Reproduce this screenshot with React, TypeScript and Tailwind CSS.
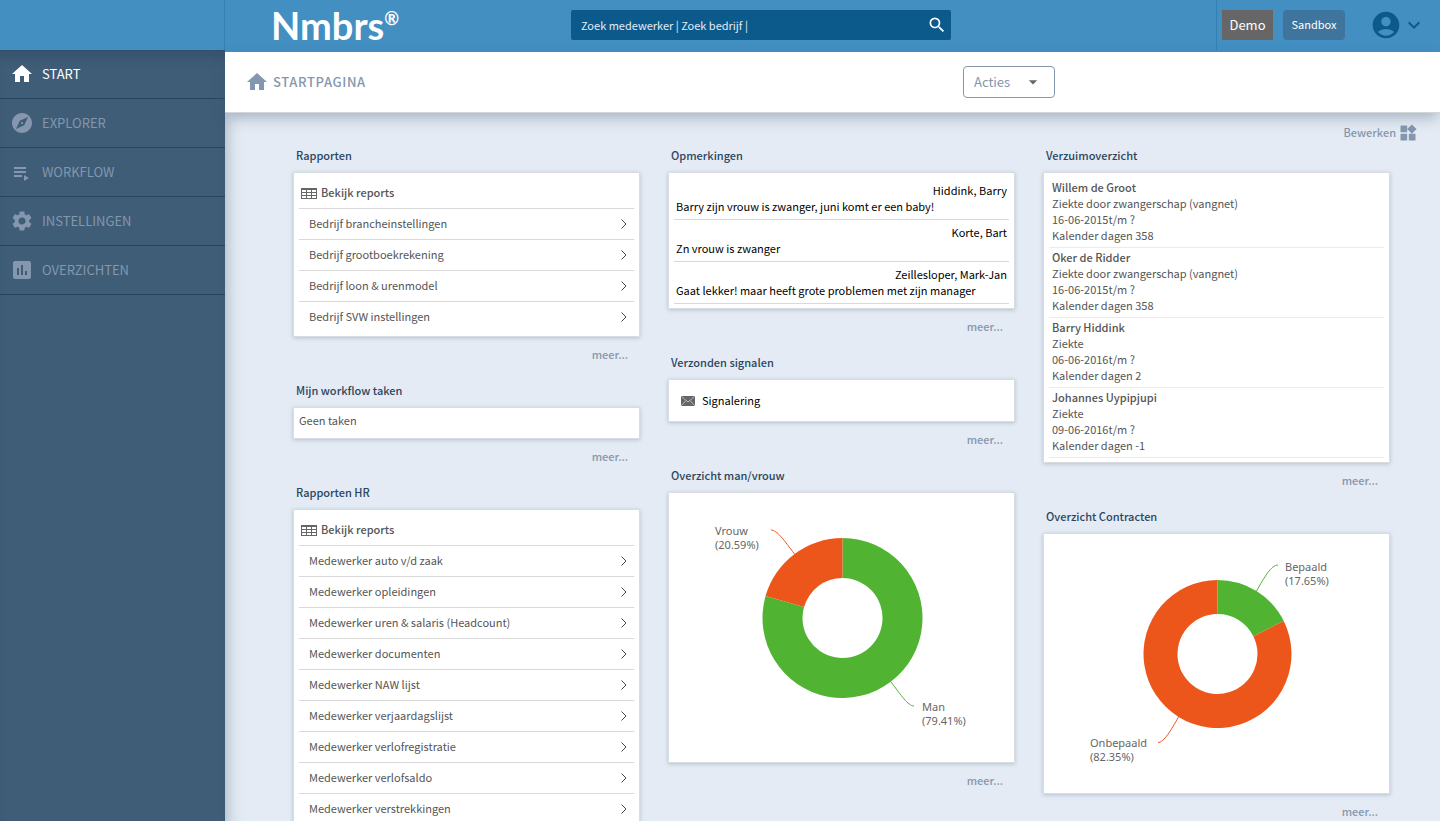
import type { ReactNode } from 'react';
import {
    MdAccountCircle,
    MdArrowDropDown,
    MdAssessment,
    MdExplore,
    MdHome,
    MdKeyboardArrowDown,
    MdSearch,
    MdSettings,
    MdWidgets,
} from 'react-icons/md';

const menu = [
    { label: 'START', icon: MdHome, active: true },
    { label: 'EXPLORER', icon: MdExplore },
    { label: 'WORKFLOW', icon: WorkflowIcon },
    { label: 'INSTELLINGEN', icon: MdSettings },
    { label: 'OVERZICHTEN', icon: MdAssessment },
];

const companyReports = ['Bedrijf brancheinstellingen', 'Bedrijf grootboekrekening', 'Bedrijf loon & urenmodel', 'Bedrijf SVW instellingen'];

const hrReports = [
    'Medewerker auto v/d zaak',
    'Medewerker opleidingen',
    'Medewerker uren & salaris (Headcount)',
    'Medewerker documenten',
    'Medewerker NAW lijst',
    'Medewerker verjaardagslijst',
    'Medewerker verlofregistratie',
    'Medewerker verlofsaldo',
    'Medewerker verstrekkingen',
];

const remarks = [
    { name: 'Hiddink, Barry', text: 'Barry zijn vrouw is zwanger, juni komt er een baby!' },
    { name: 'Korte, Bart', text: 'Zn vrouw is zwanger' },
    { name: 'Zeillesloper, Mark-Jan', text: 'Gaat lekker! maar heeft grote problemen met zijn manager' },
];

const absences = [
    { name: 'Willem de Groot', reason: 'Ziekte door zwangerschap (vangnet)', period: '16-06-2015t/m ?', days: 358 },
    { name: 'Oker de Ridder', reason: 'Ziekte door zwangerschap (vangnet)', period: '16-06-2015t/m ?', days: 358 },
    { name: 'Barry Hiddink', reason: 'Ziekte', period: '06-06-2016t/m ?', days: 2 },
    { name: 'Johannes Uypipjupi', reason: 'Ziekte', period: '09-06-2016t/m ?', days: -1 },
];

function Widget({ title, children }: { title: string; children: ReactNode }) {
    return (
        <section className="mb-5 flex flex-col">
            <h2 className="mb-[9px] pl-[3px] font-medium text-[#2b465f]">{title}</h2>
            <div className="border border-[#d9dde2] bg-white shadow-[0_1px_4px_rgba(70,95,125,0.3)]">{children}</div>
            <a href="#" className="mt-[9px] mr-3 self-end font-medium text-[#8597ae]">
                meer...
            </a>
        </section>
    );
}

function WorkflowIcon({ size }: { size: number }) {
    return (
        <svg width={size} height={size} viewBox="0 0 24 24" fill="currentColor">
            <path d="M4 7h12v2H4zM4 11h12v2H4zM4 15h8v2H4zM14 15v6l5-3z" />
        </svg>
    );
}

function TableIcon() {
    return (
        <svg width="16" height="11" viewBox="0 0 16 11" fill="none" stroke="#666" shapeRendering="crispEdges">
            <path d="M0 .5h16M0 1.5h16M0 4.5h16M0 7.5h16M0 10.5h16M.5 0v11M5.5 0v11M10.5 0v11M15.5 0v11" />
        </svg>
    );
}

function ReportList({ reports }: { reports: string[] }) {
    return (
        <div className="px-[5px] pt-[5px] pb-[3px] text-[#555]">
            <div className="flex h-[31px] items-center gap-1 border-b border-[#d9d9d9] pl-0.5 font-medium">
                <TableIcon />
                <span className="pb-0.5">Bekijk reports</span>
            </div>
            <ul>
                {reports.map((report) => (
                    <li key={report} className="border-b border-[#d9d9d9] last:border-transparent">
                        <a href="#" className="flex h-[30px] items-center justify-between pr-[7px] pl-2.5">
                            <span className="pb-0.5">{report}</span>
                            <svg width="6" height="10" viewBox="0 0 6 10" fill="none" stroke="#444">
                                <path d="M.5 .5L5 5L.5 9.5" />
                            </svg>
                        </a>
                    </li>
                ))}
            </ul>
        </div>
    );
}

// Path of a ring segment; from and to are fractions of the full circle, clockwise from the top
function ringSegment(cx: number, cy: number, outer: number, inner: number, from: number, to: number) {
    const point = (r: number, f: number) => {
        const a = f * 2 * Math.PI;
        return `${(cx + r * Math.sin(a)).toFixed(2)} ${(cy - r * Math.cos(a)).toFixed(2)}`;
    };
    const large = to - from > 0.5 ? 1 : 0;
    return `M${point(outer, from)}A${outer} ${outer} 0 ${large} 1 ${point(outer, to)}L${point(inner, to)}A${inner} ${inner} 0 ${large} 0 ${point(inner, from)}Z`;
}

type ChartLabel = { name: string; share: string; x: number; y: number; line: string };

function DonutChart(props: { height: number; cy: number; radius: number; split: number; green: ChartLabel; orange: ChartLabel }) {
    const { height, cy, radius, split, green, orange } = props;
    const parts = [
        { ...green, color: '#50b432', d: ringSegment(173.5, cy, radius, 40, 0, split) },
        { ...orange, color: '#ed561b', d: ringSegment(173.5, cy, radius, 40, split, 1) },
    ];

    return (
        <svg width="345" height={height} viewBox={`0 0 345 ${height}`} className="mx-auto block font-['Noto_Sans',sans-serif] text-[11px]">
            {parts.map((part) => (
                <g key={part.name}>
                    <path d={part.d} fill={part.color} />
                    <path d={part.line} fill="none" stroke={part.color} />
                    <text x={part.x} y={part.y} fill="#666">
                        {part.name}
                    </text>
                    <text x={part.x} y={part.y + 14} fill="#666">
                        {part.share}
                    </text>
                </g>
            ))}
        </svg>
    );
}

function Sidebar() {
    return (
        <aside className="z-10 flex w-[225px] shrink-0 flex-col bg-[#3f5d77] shadow-[0_50px_16px_rgba(60,85,115,0.45)]">
            <div className="h-[50px] border-r border-[#347fb2] bg-[#438fc2]" />
            <nav className="flex-1 shadow-[inset_0_14px_14px_-10px_rgba(30,50,75,0.35)]">
                {menu.map(({ label, icon: Icon, active }) => (
                    <a
                        key={label}
                        href="#"
                        className={`flex h-[49px] items-center gap-2 border-b border-[#284560] pl-2.5 text-[13px] ${active ? 'text-white' : 'text-[#8497ae]'}`}
                    >
                        <Icon size={24} />
                        {label}
                    </a>
                ))}
            </nav>
        </aside>
    );
}

function Header() {
    return (
        <header className="z-20 flex h-[52px] shrink-0 bg-[#438fc2] pl-[46px] text-white">
            <div className="flex w-[300px] shrink-0 items-start font-[Lato,sans-serif] font-bold">
                <span className="text-[38px] leading-[50px]">Nmbrs</span>
                <span className="pt-2 text-[18px] leading-5">®</span>
            </div>
            <div className="mt-2.5 flex h-[30px] w-[380px] items-center rounded-xs bg-[#0c5a8b] pr-1">
                <input
                    type="text"
                    aria-label="Zoek"
                    placeholder="Zoek medewerker | Zoek bedrijf |"
                    className="h-full flex-1 bg-transparent px-2.5 outline-none placeholder:text-[#e3edf5]"
                />
                <button aria-label="Zoeken">
                    <MdSearch size={20} />
                </button>
            </div>
            <div className="ml-auto flex h-[50px] items-center border-l border-[#347fb2] pr-3.5 pl-[5px]">
                <button className="h-[30px] w-[51px] bg-[#666] text-[13px]">Demo</button>
                <button className="ml-2.5 h-[30px] w-[62px] rounded bg-[#3f749d] pb-0.5">Sandbox</button>
                <button aria-label="Account" className="ml-[25px] flex items-center text-[#0c5a8b]">
                    <MdAccountCircle size={32} />
                    <MdKeyboardArrowDown size={24} />
                </button>
            </div>
        </header>
    );
}

export default function App() {
    return (
        <div className="flex h-screen overflow-hidden bg-[#e4ebf4] font-['Noto_Sans_CJK_SC',sans-serif] text-[11px] leading-4">
            <Sidebar />

            <div className="flex flex-1 flex-col">
                <Header />

                {/* Title bar */}
                <div className="z-20 flex h-[61px] shrink-0 items-center border-b border-[#d3d5d8] bg-white pl-5 text-[#8497ae] shadow-[0_6px_14px_-2px_rgba(60,85,115,0.4)]">
                    <MdHome size={24} />
                    <h1 className="flex-1 pl-1 text-[13px] font-medium tracking-wider">STARTPAGINA</h1>
                    <div className="w-[477px]">
                        <div className="relative w-[92px]">
                            <select aria-label="Acties" className="h-8 w-full appearance-none rounded border border-[#8497ae] bg-white pl-2.5 text-[13px]">
                                <option>Acties</option>
                            </select>
                            <MdArrowDropDown size={20} className="pointer-events-none absolute top-1.5 right-3 text-[#666]" />
                        </div>
                    </div>
                </div>

                <main className="flex-1 overflow-y-auto [scrollbar-width:none]">
                    <div className="flex justify-end pt-3 pr-[22px]">
                        <button className="flex h-4 items-center gap-0.5 font-medium text-[#8497ae]">
                            <span className="pb-0.5">Bewerken</span>
                            <MdWidgets size={20} />
                        </button>
                    </div>

                    {/* Dashboard */}
                    <div className="grid grid-cols-3 items-start gap-7 pt-1.5 pr-[50px] pl-[68px]">
                        <div>
                            <Widget title="Rapporten">
                                <ReportList reports={companyReports} />
                            </Widget>
                            <Widget title="Mijn workflow taken">
                                <p className="px-[5px] pt-1 pb-2.5 text-[#555]">Geen taken</p>
                            </Widget>
                            <Widget title="Rapporten HR">
                                <ReportList reports={hrReports} />
                            </Widget>
                        </div>

                        <div>
                            <Widget title="Opmerkingen">
                                <div className="px-[5px] pt-[5px] pb-1 text-black">
                                    {remarks.map((remark) => (
                                        <div key={remark.name} className="border-b border-[#d9d9d9] px-0.5 pt-1 pb-[5px]">
                                            <p className="text-right">{remark.name}</p>
                                            <p>{remark.text}</p>
                                        </div>
                                    ))}
                                </div>
                            </Widget>
                            <Widget title="Verzonden signalen">
                                <div className="flex h-[41px] items-center gap-[7px] pl-3 text-black">
                                    <svg width="14" height="10" viewBox="0 0 14 10">
                                        <rect width="14" height="10" rx="1" fill="#666" />
                                        <path d="M.5 .5L7 6L13.5 .5M.5 9.5L5 4.5M13.5 9.5L9 4.5" fill="none" stroke="#ccc" strokeWidth=".8" />
                                    </svg>
                                    <span className="pb-0.5">Signalering</span>
                                </div>
                            </Widget>
                            <Widget title="Overzicht man/vrouw">
                                <DonutChart
                                    height={269}
                                    cy={125}
                                    radius={80}
                                    split={0.7941}
                                    green={{ name: 'Man', share: '(79.41%)', x: 253, y: 218, line: 'M222 189C232 202 239 213 245 213' }}
                                    orange={{ name: 'Vrouw', share: '(20.59%)', x: 46, y: 42, line: 'M125.5 61C115 47 108 37 102 37' }}
                                />
                            </Widget>
                        </div>

                        <div>
                            <Widget title="Verzuimoverzicht">
                                <div className="px-[5px] pt-[5px] pb-1 text-[#555]">
                                    {absences.map((absence) => (
                                        <div key={absence.name} className="border-b border-[#ebebeb] px-[3px] pt-px pb-1">
                                            <p className="font-medium">{absence.name}</p>
                                            <p>{absence.reason}</p>
                                            <p>{absence.period}</p>
                                            <p>Kalender dagen {absence.days}</p>
                                        </div>
                                    ))}
                                </div>
                            </Widget>
                            <Widget title="Overzicht Contracten">
                                <DonutChart
                                    height={259}
                                    cy={120}
                                    radius={74}
                                    split={0.1765}
                                    green={{ name: 'Bepaald', share: '(17.65%)', x: 241, y: 37, line: 'M212.5 57C220 44 227 31 234 31' }}
                                    orange={{ name: 'Onbepaald', share: '(82.35%)', x: 46, y: 213, line: 'M134.5 183C127 196 120 208.5 114 208.5' }}
                                />
                            </Widget>
                        </div>
                    </div>
                </main>
            </div>
        </div>
    );
}
